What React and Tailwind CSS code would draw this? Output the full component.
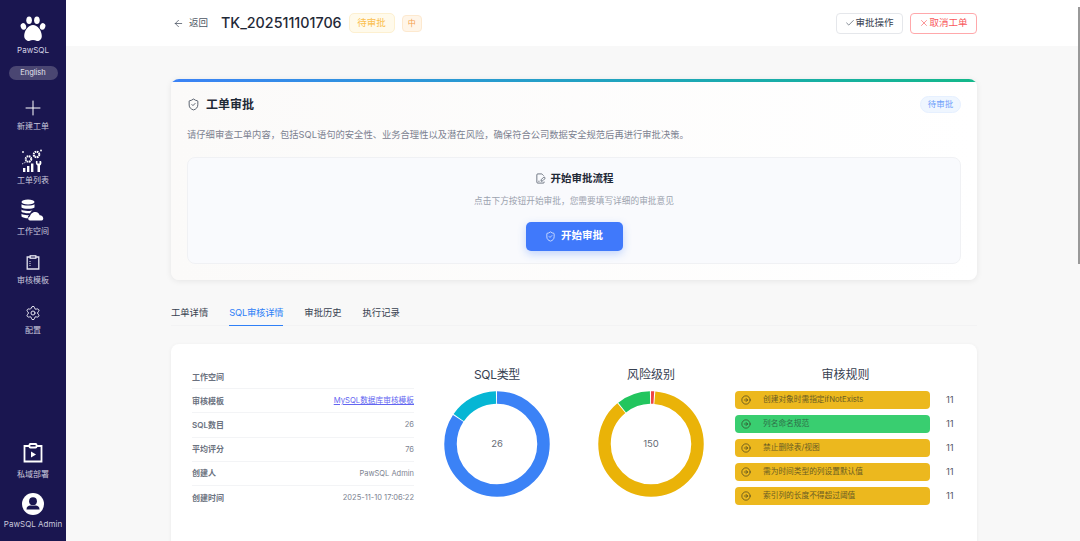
import { ArrowLeft, Check, CircleArrowRight, FileSignature, Plus, Settings, ShieldCheck, X } from "lucide-react";

const fontStack = "font-['Inter','Noto_Sans_CJK_SC',sans-serif]";

function PawIcon() {
    return (
        <svg width="26" height="26" viewBox="0 0 26 26" fill="#fff">
            <ellipse cx="3.400" cy="10.400" rx="2.700" ry="3.400" transform="rotate(-18 3.400 10.400)" />
            <ellipse cx="9.100" cy="4.200" rx="2.800" ry="3.800" />
            <ellipse cx="16.900" cy="4.200" rx="2.800" ry="3.800" />
            <ellipse cx="22.600" cy="10.400" rx="2.700" ry="3.400" transform="rotate(18 22.600 10.400)" />
            <path d="M13 9c4.500 0 8.800 5.500 8.800 11 0 3.800-2.800 5.300-4.900 4.900-1.300-.3-2.600-.8-3.900-.8s-2.600.5-3.900.8C8 25.300 4.200 23.800 4.200 20 4.200 14.500 8.500 9 13 9z" />
        </svg>
    );
}

function TicketListIcon() {
    return (
        <svg width="24" height="24" viewBox="0 0 24 24" fill="#fff">
            <circle cx="2" cy="3" r="0.900" />
            <circle cx="20" cy="1.500" r="0.900" />
            <path d="M1 15l5-2.500M13 7.500l2-1" stroke="#fff" strokeWidth="0.800" strokeDasharray="1.500 1" />
            <circle cx="7.500" cy="10" r="2.800" fill="none" stroke="#fff" strokeWidth="2" strokeDasharray="1.600 0.600" />
            <circle cx="15.500" cy="5.500" r="2.800" fill="none" stroke="#fff" strokeWidth="2" strokeDasharray="1.600 0.600" />
            <rect x="2" y="19" width="2.400" height="4" />
            <rect x="6" y="17" width="2.400" height="6" />
            <rect x="10" y="14.500" width="2.400" height="8.500" />
            <path d="M15 12h1.500v2.500h2V12H20c.8 1.800.5 3.600-1 4.500V23h-2.500v-6.500c-1.500-.9-2-2.700-1.500-4.500z" />
        </svg>
    );
}

function WorkspaceIcon() {
    return (
        <svg width="24" height="24" viewBox="0 0 24 24" fill="#fff">
            <ellipse cx="7" cy="3" rx="6.500" ry="2.600" />
            <path d="M.5 5.200C2 7 12 7 13.500 5.200V8.500C12 10.300 2 10.300.5 8.500z" />
            <path d="M.5 10.500C2 12.300 10 12.400 12 11c-1.500.8-2.500 2-2.800 3.200C6 14.600 2 14 .5 12.800z" />
            <path d="M.5 14.800c2 1.300 5 1.500 7.500 1.300-.9.8-1.300 2-1.100 3.200-2.500 0-5.200-.6-6.400-1.800z" />
            <path d="M9 21.500c-2.200 0-2.500-3.500 0-4 .1-2.200 2.500-4.800 5.500-4.500 2.200.2 3.600 1.600 4.200 3.300 3.200-.5 5.300 4.800 1.800 5.200z" />
        </svg>
    );
}

function TemplateIcon() {
    return (
        <svg width="14" height="15" viewBox="0 0 14 15" fill="none" stroke="#e5e4ef" strokeWidth="1.300">
            <path d="M4 2H1.200v12h11.600V2H10" />
            <rect x="4.200" y="0.800" width="5.600" height="2.400" />
            <path d="M4 6v5" strokeDasharray="1 1" strokeWidth="1" />
        </svg>
    );
}

function DeployIcon() {
    return (
        <svg width="20" height="20" viewBox="0 0 20 20" fill="none" stroke="#fff" strokeWidth="1.800">
            <path d="M6 3H1.500v15.500h17V3H14" />
            <rect x="6.500" y="1" width="7" height="3.500" rx="0.800" />
            <path d="M8 8.500l5 3-5 3z" fill="#fff" stroke="none" />
        </svg>
    );
}

function UserIcon() {
    return (
        <svg width="22" height="22" viewBox="0 0 22 22">
            <circle cx="11" cy="11" r="11" fill="#fff" />
            <circle cx="11" cy="8.200" r="3.900" fill="#1a1650" />
            <path d="M4.500 16.200c0-2.400 2-3.700 3.700-3.700h5.600c1.700 0 3.700 1.300 3.700 3.700v.4H4.500z" fill="#1a1650" />
        </svg>
    );
}

function NavItem({ icon, label, className, labelClass }) {
    return (
        <div className={`flex flex-col items-center ${className}`}>
            <div className="flex h-6 items-center justify-center">{icon}</div>
            <span className={`text-[8px] leading-3 text-[#c9c8dc] ${labelClass}`}>{label}</span>
        </div>
    );
}

function Sidebar() {
    return (
        <aside className="flex h-full w-[66px] shrink-0 flex-col items-center bg-[#1a1650]">
            <div className="mt-[16px]"><PawIcon /></div>
            <span className="mt-[2px] text-[8px] leading-3 text-[#d5d4e4]">PawSQL</span>
            <span className="mt-[10px] flex h-[14px] w-[49px] items-center justify-center rounded-full bg-[#4a4672] text-[7.500px] text-[#e4e3ee]">English</span>
            <NavItem className="mt-[16px]" labelClass="mt-0" label="新建工单" icon={<Plus size={24} strokeWidth={1} color="#fff" />} />
            <NavItem className="mt-[17px]" labelClass="mt-[1px]" label="工单列表" icon={<TicketListIcon />} />
            <NavItem className="mt-[13px]" labelClass="mt-[2px]" label="工作空间" icon={<WorkspaceIcon />} />
            <NavItem className="mt-[13px]" labelClass="mt-0" label="审核模板" icon={<TemplateIcon />} />
            <NavItem className="mt-[15px]" labelClass="-mt-[1px]" label="配置" icon={<Settings size={16} strokeWidth={1.500} color="#e5e4ef" />} />
            <div className="flex-1" />
            <NavItem labelClass="mt-[3px]" label="私域部署" icon={<DeployIcon />} />
            <NavItem className="mt-[12px] mb-[11px]" labelClass="mt-[2px] text-[7.800px] whitespace-nowrap" label="PawSQL Admin" icon={<UserIcon />} />
        </aside>
    );
}

function Header() {
    return (
        <header className="flex h-[46px] shrink-0 items-center bg-white pl-[107px] pr-[103px]">
            <ArrowLeft size={11} strokeWidth={1.500} color="#374151" />
            <span className="ml-[5px] text-[9.500px] text-[#4b5563]">返回</span>
            <h1 className="ml-[13px] text-[14.300px] font-medium text-[#1f2937]">TK_202511101706</h1>
            <span className="ml-[7px] flex h-[20px] w-[46px] items-center justify-center rounded-[5px] border border-[#fdf0d0] bg-[#fffaeb] text-[9.500px] text-[#fbbf4d]">待审批</span>
            <span className="ml-[7px] flex h-[17px] w-[20px] items-center justify-center rounded-[4px] border border-[#fde9cf] bg-[#fff5e8] text-[8px] text-[#f59e4b]">中</span>
            <div className="flex-1" />
            <button className="flex h-[21px] w-[67px] items-center justify-center rounded-[4px] border border-[#e5e7eb] bg-white text-[9.500px] text-[#374151]">
                <Check size={10} strokeWidth={1.500} />审批操作
            </button>
            <button className="ml-[7px] flex h-[21px] w-[67px] items-center justify-center rounded-[4px] border border-[#ffa8ab] bg-white text-[9.500px] text-[#f8585c]">
                <X size={10} strokeWidth={1.500} />取消工单
            </button>
        </header>
    );
}

function ApprovalCard() {
    return (
        <section className="h-[201px] overflow-hidden rounded-lg bg-gradient-to-r from-[#fbfaf9] to-white shadow-[0_1px_6px_rgba(0,0,0,0.08)]">
            <div className="h-[3px] bg-gradient-to-r from-[#3b82f6] to-[#14b88a]" />
            <div className="px-4">
                <div className="flex h-[45px] items-center">
                    <ShieldCheck size={13} strokeWidth={1.500} color="#374151" />
                    <h2 className="ml-[6px] text-[12px] font-bold text-[#1f2937]">工单审批</h2>
                    <div className="flex-1" />
                    <span className="flex h-[17px] w-[41px] items-center justify-center rounded-full border border-[#e6f0ff] bg-[#eff6ff] text-[8.500px] text-[#6ea1fa]">待审批</span>
                </div>
                <p className="mt-[1px] text-[9.300px] leading-[14px] text-[#7b8190]">请仔细审查工单内容，包括SQL语句的安全性、业务合理性以及潜在风险，确保符合公司数据安全规范后再进行审批决策。</p>
                <div className="mt-[15px] flex h-[107px] flex-col items-center rounded-lg border border-[#f0f1f4] bg-[#f9fafd]">
                    <div className="mt-[13px] flex items-center">
                        <FileSignature size={11} strokeWidth={1.500} color="#374151" />
                        <h3 className="ml-[5px] text-[10.500px] font-bold text-[#1f2937]">开始审批流程</h3>
                    </div>
                    <p className="mt-[8px] text-[8.700px] leading-3 text-[#9ca3af]">点击下方按钮开始审批，您需要填写详细的审批意见</p>
                    <button className="mt-[15px] flex h-[29px] w-[97px] items-center justify-center rounded-[5px] bg-[#4079fb] text-[10.500px] font-bold text-white shadow-[0_3px_8px_rgba(64,121,251,0.3)]">
                        <ShieldCheck size={11} strokeWidth={1.500} />
                        <span className="ml-[5px]">开始审批</span>
                    </button>
                </div>
            </div>
        </section>
    );
}

function Tabs() {
    const items = ["工单详情", "SQL审核详情", "审批历史", "执行记录"];
    return (
        <nav className="mt-[20px] flex h-[26px] gap-[21px] border-b border-[#f3f3f4]">
            {items.map((item) => (
                <span
                    key={item}
                    className={
                        item === "SQL审核详情"
                            ? "h-[26px] border-b border-[#2f80f7] pt-[7px] text-[9.300px] leading-3 tracking-[-0.2px] text-[#2f80f7]"
                            : "h-[26px] pt-[7px] text-[9.300px] leading-3 text-[#374151]"
                    }
                >
                    {item}
                </span>
            ))}
        </nav>
    );
}

function InfoRow({ label, last, children }) {
    return (
        <div className={`flex h-[24.200px] items-center justify-between ${last ? "" : "border-b border-[#f3f4f6]"}`}>
            <span className="text-[8px] font-semibold text-[#6b7280]">{label}</span>
            {children}
        </div>
    );
}

function InfoValue({ children }) {
    return <span className="text-[7.500px] text-[#7c8290]">{children}</span>;
}

function Donut({ title, titleClass, total, segments, label }) {
    // about one pixel of white between the slices
    const gap = total / 292;
    let offset = 0;
    return (
        <div className="flex w-[106px] flex-col items-center">
            <h4 className={`h-[20px] text-[12px] leading-5 text-[#374151] ${titleClass}`}>{title}</h4>
            <div className="relative mt-[6px] h-[106px] w-[106px]">
                <svg width="106" height="106" viewBox="0 0 106 106" className="-rotate-90">
                    {segments.map((seg) => {
                        const circle = (
                            <circle
                                key={seg.color}
                                cx="53"
                                cy="53"
                                r="46.500"
                                fill="none"
                                stroke={seg.color}
                                strokeWidth="12.500"
                                pathLength={total}
                                strokeDasharray={`${seg.value - gap} ${total - seg.value + gap}`}
                                strokeDashoffset={-offset}
                            />
                        );
                        offset += seg.value;
                        return circle;
                    })}
                </svg>
                <span className="absolute inset-0 flex items-center justify-center text-[9.500px] text-[#666b75]">{label}</span>
            </div>
        </div>
    );
}

function RuleRow({ text, green }) {
    return (
        <div className="flex h-[18px] items-center">
            <div className={`flex h-[18px] w-[195px] items-center rounded-[4px] pl-[6px] ${green ? "bg-[#39ce70] text-[#2f6b47]" : "bg-[#ecb81e] text-[#6a5c24]"}`}>
                <CircleArrowRight size={10} strokeWidth={1.500} color="#33331f" />
                <span className="ml-[12px] text-[7.700px]">{text}</span>
            </div>
            <span className="ml-[16px] text-[9.500px] text-[#555b66]">11</span>
        </div>
    );
}

function AuditPanel() {
    return (
        <section className="mt-[18px] flex h-[220px] rounded-lg bg-white pl-[21px] pt-[21px] shadow-[0_1px_4px_rgba(0,0,0,0.06)]">
            <div className="w-[222px]">
                <InfoRow label="工作空间" />
                <InfoRow label="审核模板">
                    <a className="text-[7.700px] text-[#6366f1] underline">MySQL数据库审核模板</a>
                </InfoRow>
                <InfoRow label="SQL数目"><InfoValue>26</InfoValue></InfoRow>
                <InfoRow label="平均评分"><InfoValue>76</InfoValue></InfoRow>
                <InfoRow label="创建人"><InfoValue>PawSQL Admin</InfoValue></InfoRow>
                <InfoRow label="创建时间" last><InfoValue>2025-11-10 17:06:22</InfoValue></InfoRow>
            </div>
            <div className="ml-[30px]">
                <Donut title="SQL类型" titleClass="tracking-[-0.3px]" total={26} label="26" segments={[{ value: 22, color: "#3b82f6" }, { value: 4, color: "#06b6d4" }]} />
            </div>
            <div className="ml-[48px]">
                <Donut
                    title="风险级别"
                    total={150}
                    label="150"
                    segments={[{ value: 2, color: "#ef4444" }, { value: 132, color: "#eab308" }, { value: 16, color: "#22c55e" }]}
                />
            </div>
            <div className="ml-[31px] flex flex-col">
                <h4 className="h-[20px] w-[221px] text-center text-[12px] leading-5 text-[#374151]">审核规则</h4>
                <div className="mt-[6px] flex flex-col gap-[6px]">
                    <RuleRow text="创建对象时需指定ifNotExists" />
                    <RuleRow text="列名命名规范" green />
                    <RuleRow text="禁止删除表/视图" />
                    <RuleRow text="需为时间类型的列设置默认值" />
                    <RuleRow text="索引列的长度不得超过阈值" />
                </div>
            </div>
        </section>
    );
}

export default function App() {
    return (
        <div className={`relative flex h-[541px] w-[1080px] overflow-hidden bg-[#f8f8f8] ${fontStack}`}>
            <Sidebar />
            <div className="flex min-w-0 flex-1 flex-col">
                <Header />
                <main className="flex-1 pl-[105px] pr-[103px] pt-[33px]">
                    <ApprovalCard />
                    <Tabs />
                    <AuditPanel />
                </main>
            </div>
            {/* scrollbar thumb sits over the page */}
            <div className="absolute right-0 top-[7px] h-[257px] w-[2px] bg-[#999]" />
        </div>
    );
}
